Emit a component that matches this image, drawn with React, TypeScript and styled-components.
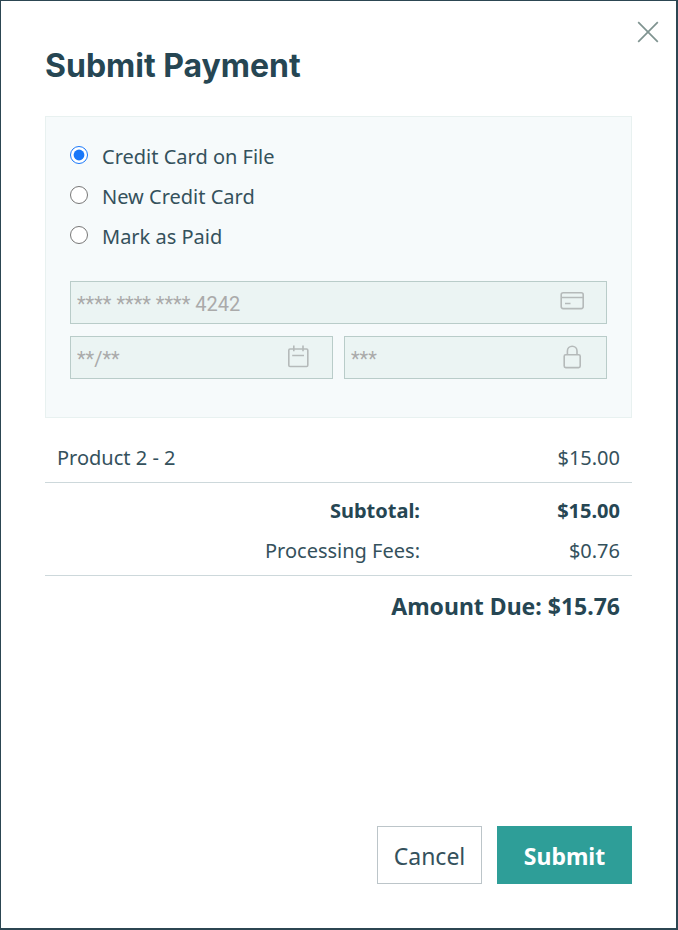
import React, { useState } from "react";
import styled, { createGlobalStyle } from "styled-components";

const INK = "#264653";
const TEXT = "#34515c";
const TEAL = "#2e9e98";

const GlobalStyle = createGlobalStyle`
  *, *::before, *::after { box-sizing: border-box; }
  body {
    margin: 0;
    background: #fff;
    color: ${TEXT};
    font-family: "Segoe UI", "Noto Sans", "Open Sans", sans-serif;
    font-size: 20px;
    line-height: 28px;
  }
`;

const Dialog = styled.form`
  position: relative;
  display: flex;
  flex-direction: column;
  min-height: 100vh;
  padding: 45px 44px 44px;
  border: solid #2c4652;
  border-width: 1px 2px 2px 1px;
`;

const CloseButton = styled.button`
  position: absolute;
  top: 16px;
  right: 13px;
  display: flex;
  padding: 4px;
  border: 0;
  background: none;
  color: #7f9390;
  cursor: pointer;
`;

const Title = styled.h1`
  margin: 0 0 30px;
  color: ${INK};
  font-family: Gilroy, Inter, sans-serif;
  font-size: 32px;
  font-weight: 700;
  line-height: 40px;
`;

const Panel = styled.fieldset`
  min-width: 0;
  margin: 0;
  padding: 20px 24px 38px;
  border: 1px solid #e8f1f0;
  background: #f6fafb;
`;

const Options = styled.div`
  display: flex;
  flex-direction: column;
  margin-bottom: 24px;
`;

const Option = styled.label`
  display: flex;
  gap: 14px;
  height: 40px;
  line-height: 40px;
`;

const Radio = styled.input`
  width: 18px;
  height: 18px;
  margin: 9px 0 0;
  accent-color: #1877f9;
`;

const FieldGrid = styled.div`
  display: grid;
  grid-template-columns: repeat(2, minmax(0, 1fr));
  gap: 12px 11px;
`;

const Field = styled.div<{ $wide?: boolean }>`
  display: flex;
  align-items: center;
  grid-column: ${(p) => (p.$wide ? "1 / -1" : "auto")};
  height: 43px;
  padding-right: 22px;
  border: 1px solid #b9ccc9;
  background: #ebf4f3;
  color: #b5baba;

  svg {
    flex: none;
    margin-bottom: 2px;
  }
`;

const FieldInput = styled.input`
  flex: 1;
  min-width: 0;
  height: 100%;
  padding: 2px 6px 0;
  border: 0;
  background: none;
  color: #aaaaaa;
  font-family: "Segoe UI", Roboto, sans-serif;
  font-size: 20px;
`;

const Summary = styled.table`
  width: 100%;
  margin-top: 20px;
  border-collapse: collapse;
`;

const Section = styled.tbody`
  border-bottom: 1px solid #cdd8db;

  & + & > tr:first-child > * {
    padding-top: 8px;
  }

  > tr:last-child > * {
    padding-bottom: 4px;
  }

  &:last-child {
    border-bottom: 0;
  }
`;

const Cell = styled.td<{ $align?: string; $strong?: boolean; $total?: boolean }>`
  padding: 0 12px;
  color: ${(p) => (p.$strong ? INK : TEXT)};
  font-size: ${(p) => (p.$total ? "23px" : "20px")};
  font-weight: ${(p) => (p.$strong ? 700 : 400)};
  line-height: ${(p) => (p.$total ? "44px" : "40px")};
  text-align: ${(p) => p.$align ?? "left"};
`;

const AmountColumn = styled.col`
  width: 200px;
`;

const Actions = styled.div`
  display: flex;
  justify-content: flex-end;
  gap: 15px;
  margin-top: auto;
`;

const Button = styled.button<{ $primary?: boolean }>`
  min-width: ${(p) => (p.$primary ? "135px" : "105px")};
  height: 58px;
  padding: 2px 12px 0;
  border: 1px solid ${(p) => (p.$primary ? TEAL : "#bcc5c9")};
  background: ${(p) => (p.$primary ? TEAL : "#fff")};
  color: ${(p) => (p.$primary ? "#fff" : TEXT)};
  font-family: inherit;
  font-size: 23px;
  font-weight: ${(p) => (p.$primary ? 700 : 400)};
  cursor: pointer;
`;

const CloseIcon = () => (
  <svg width="22" height="22" viewBox="0 0 22 22" fill="none" stroke="currentColor" strokeWidth="1.7" aria-hidden="true">
    <path d="M1.2 1.2 20.8 20.8M20.8 1.2 1.2 20.8" />
  </svg>
);

const CardIcon = () => (
  <svg width="24" height="24" viewBox="0 0 24 24" fill="none" stroke="currentColor" strokeWidth="1.6" aria-hidden="true">
    <rect x="1.2" y="2.8" width="22" height="15.8" rx="2" />
    <path d="M1.2 7.5h22M5 13.5h5.5" />
  </svg>
);

const CalendarIcon = () => (
  <svg width="24" height="24" viewBox="0 0 24 24" fill="none" stroke="currentColor" strokeWidth="1.6" aria-hidden="true">
    <rect x="2.8" y="4" width="19" height="17.5" rx="1.2" />
    <path d="M7.8.5v5.8M17 .5v5.8M6.2 10.5h11.8" />
  </svg>
);

const LockIcon = () => (
  <svg width="24" height="24" viewBox="0 0 24 24" fill="none" stroke="currentColor" strokeWidth="1.6" aria-hidden="true">
    <rect x="4.2" y="9.8" width="16" height="12.8" rx="1.5" />
    <path d="M7.4 9.8V6a4.8 4.8 0 0 1 9.6 0v3.8" />
  </svg>
);

const METHODS = ["Credit Card on File", "New Credit Card", "Mark as Paid"];

export default function App() {
  const [method, setMethod] = useState(METHODS[0]);

  return (
    <>
      <GlobalStyle />
      <Dialog role="dialog" aria-labelledby="payment-title" onSubmit={(e) => e.preventDefault()}>
        <CloseButton type="button" aria-label="Close">
          <CloseIcon />
        </CloseButton>
        <Title id="payment-title">Submit Payment</Title>
        <Panel aria-label="Payment method">
          <Options>
            {METHODS.map((name) => (
              <Option key={name}>
                <Radio type="radio" name="method" checked={method === name} onChange={() => setMethod(name)} />
                {name}
              </Option>
            ))}
          </Options>
          <FieldGrid>
            <Field $wide>
              <FieldInput aria-label="Card number" disabled value="**** **** **** 4242" />
              <CardIcon />
            </Field>
            <Field>
              <FieldInput aria-label="Expiration date" disabled value="**/**" />
              <CalendarIcon />
            </Field>
            <Field>
              <FieldInput aria-label="Security code" disabled value="***" />
              <LockIcon />
            </Field>
          </FieldGrid>
        </Panel>
        <Summary>
          <colgroup>
            <col />
            <AmountColumn />
          </colgroup>
          <Section>
            <tr>
              <Cell>Product 2 - 2</Cell>
              <Cell $align="right">$15.00</Cell>
            </tr>
          </Section>
          <Section>
            <tr>
              <Cell as="th" scope="row" $align="right" $strong>Subtotal:</Cell>
              <Cell $align="right" $strong>$15.00</Cell>
            </tr>
            <tr>
              <Cell as="th" scope="row" $align="right">Processing Fees:</Cell>
              <Cell $align="right">$0.76</Cell>
            </tr>
          </Section>
          <Section>
            <tr>
              <Cell colSpan={2} $align="right" $strong $total>Amount Due: $15.76</Cell>
            </tr>
          </Section>
        </Summary>
        <Actions>
          <Button type="button">Cancel</Button>
          <Button type="submit" $primary>Submit</Button>
        </Actions>
      </Dialog>
    </>
  );
}
